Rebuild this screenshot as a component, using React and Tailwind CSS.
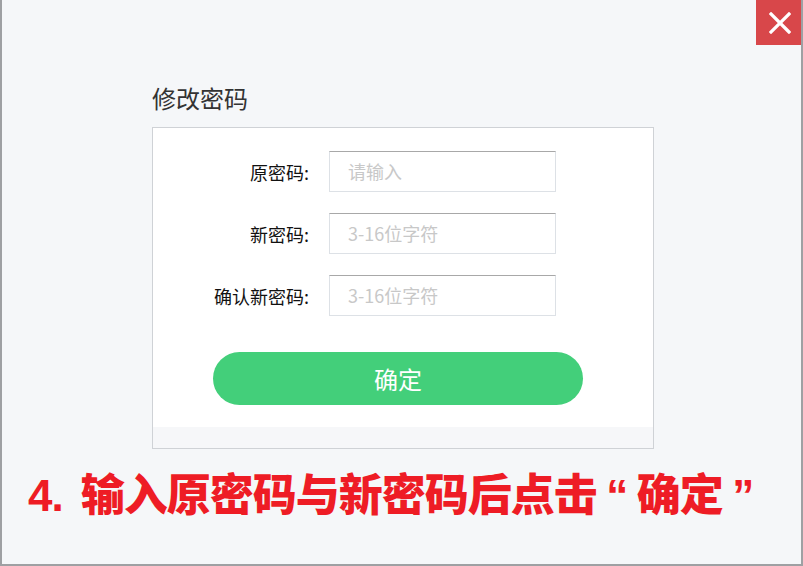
export default function App() {
  const rows = [
    { label: "原密码:", ph: "请输入" },
    { label: "新密码:", ph: "3-16位字符" },
    { label: "确认新密码:", ph: "3-16位字符" },
  ];
  return (
    <div
      className="relative w-[803px] h-[566px] overflow-hidden border-l-2 border-r-2 border-b-2 border-[#9ea0a3] bg-[#f5f7f9]"
      style={{ fontFamily: '"Noto Sans CJK SC", "Noto Sans", sans-serif' }}
    >
      <button className="absolute top-0 right-[-2px] w-[47px] h-[45px] bg-[#d8474a] flex items-center justify-center">
        <svg width="22" height="22" viewBox="0 0 22 22">
          <path d="M2 2 L20 20 M20 2 L2 20" stroke="#fff" strokeWidth="3.2" strokeLinecap="square" />
        </svg>
      </button>

      <div className="pl-[150px] pt-[83px]">
        <div className="h-[30px] leading-[30px] text-[24px] text-[#333]">修改密码</div>
        <div className="mt-[14px] w-[502px] h-[322px] border border-[#cfd2d6] bg-white flex flex-col">
          <div className="flex-1 pt-[23px]">
            <div className="flex flex-col gap-[21px]">
              {rows.map((r) => (
                <div key={r.label} className="flex items-center">
                  <div className="w-[156px] text-right text-[18px] text-[#111] leading-none">{r.label}</div>
                  <div className="ml-[20px] w-[227px] h-[41px] border border-[#dde1e6] border-t-[#a8a8a8] flex items-center pl-[18px] text-[18px] text-[#c8c8c8]">
                    {r.ph}
                  </div>
                </div>
              ))}
            </div>
            <button className="mt-[36px] ml-[60px] w-[370px] h-[53px] rounded-full bg-[#43cf7a] text-white text-[24px] flex items-center justify-center">
              确定
            </button>
          </div>
          <div className="h-[21px] bg-[#f6f7f9]"></div>
        </div>
      </div>

      <div
        className="pl-[26px] mt-[23px] text-[44px] leading-[48px] tracking-[-1px] font-black text-[#ee1c25] whitespace-nowrap flex items-center"
        style={{ fontFamily: '"Liberation Sans", "Noto Sans CJK SC", sans-serif' }}
      >
        <span className="mr-[18px]">4.</span>
        <span>输入原密码与新密码后点击</span>
        <span className="inline-block w-[40px] text-center">“</span>
        <span>确定</span>
        <span className="inline-block w-[40px] text-center">”</span>
      </div>
    </div>
  );
}
